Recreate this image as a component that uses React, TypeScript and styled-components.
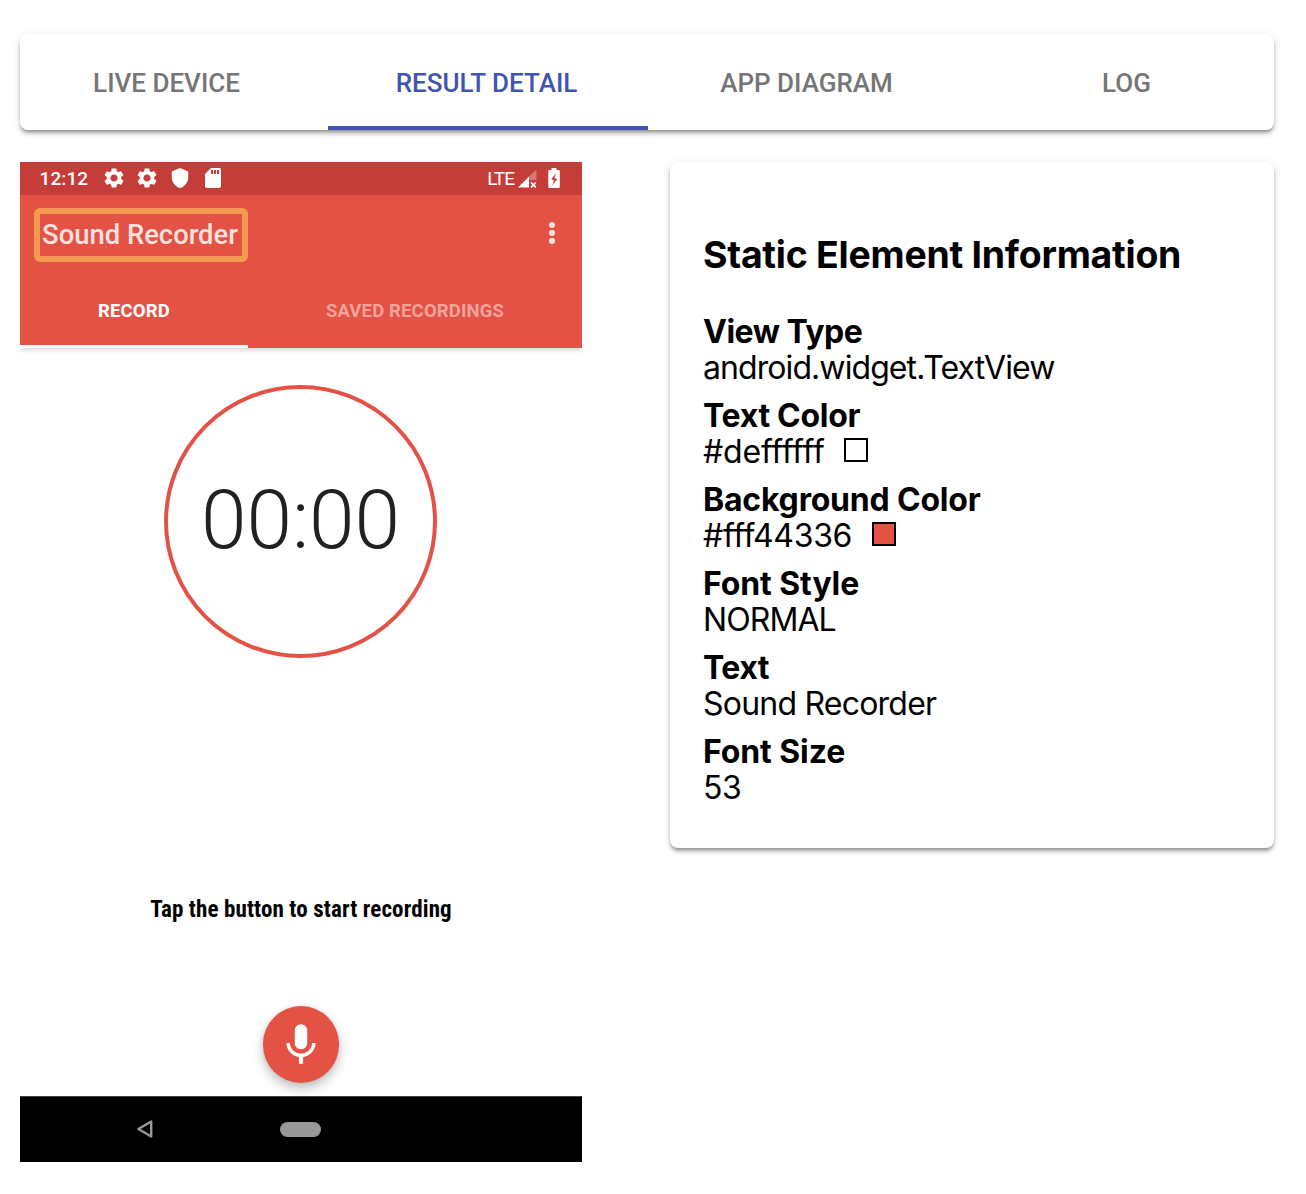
import React from "react";
import styled, { createGlobalStyle } from "styled-components";
import { MdSettings, MdShield, MdSdCard, MdMic } from "react-icons/md";

const Global = createGlobalStyle`
  * { box-sizing: border-box; }
  body { margin: 0; background: #fff; color: #000; font-family: Roboto, sans-serif; }
`;

const RED = "#e35244";

const Page = styled.div`
  width: 1306px;
  height: 1194px;
  padding: 34px 32px 32px 20px;
  display: flex;
  flex-direction: column;
  gap: 32px;
  overflow: hidden;
`;

const Paper = styled.div`
  background: #fff;
  border-radius: 8px;
  box-shadow: 0 2px 10px rgba(0, 0, 0, 0.12), 0 4px 4px rgba(0, 0, 0, 0.14),
    0 3px 3px -1px rgba(0, 0, 0, 0.26);
`;

const TabBar = styled(Paper)`
  height: 96px;
  flex: none;
  display: flex;
  overflow: hidden;
`;

const TabStrip = styled.div`
  display: flex;
  margin-left: -12px;
`;

const Tab = styled.div<{ $active?: boolean }>`
  width: 320px;
  flex: none;
  display: flex;
  align-items: center;
  justify-content: center;
  padding: ${(p) => (p.$active ? "6px 3px 0 0" : "2px 3px 0 0")};
  border-bottom: ${(p) => (p.$active ? "4px solid #4054b2" : "0")};
  color: ${(p) => (p.$active ? "#4054b2" : "#757575")};
  font-size: 26px;
  font-weight: 500;
`;

const Columns = styled.div`
  display: flex;
  gap: 88px;
  align-items: flex-start;
`;

const Phone = styled.div`
  width: 562px;
  height: 1000px;
  flex: none;
  display: flex;
  flex-direction: column;
`;

const StatusBar = styled.div`
  height: 33px;
  flex: none;
  background: #c43d39;
  color: #fff;
  display: flex;
  align-items: center;
  justify-content: space-between;
  padding: 0 22.5px 1px 19.5px;
`;

const Clock = styled.span`
  font-size: 19px;
  font-weight: 500;
  letter-spacing: 0.1px;
  width: 62.5px;
  padding-top: 1px;
`;

const StatusGroup = styled.div`
  display: flex;
  align-items: center;
  svg { display: block; }
`;

const StatusIcons = styled.div`
  display: flex;
  align-items: center;
  gap: 9px;

  svg:nth-child(3) {
    margin: 0 1px 0 0.5px;
  }
`;

const Network = styled.span`
  font-size: 19px;
  letter-spacing: -1px;
  padding-top: 1px;
  margin-right: 4px;
`;

const Indicators = styled.div`
  display: flex;
  align-items: center;
  gap: 9.5px;
`;

const AppBar = styled.div`
  height: 153px;
  flex: none;
  background: ${RED};
  display: flex;
  flex-direction: column;
  justify-content: space-between;
  box-shadow: 0 2px 5px rgba(0, 0, 0, 0.16);
  position: relative;
  clip-path: inset(0 0 -12px 0);
`;

const Toolbar = styled.div`
  display: flex;
  justify-content: space-between;
  padding: 13px 27px 0 14px;
`;

const Selection = styled.div`
  width: 214px;
  height: 54px;
  border: 6px solid #f39b50;
  border-radius: 6px;
  display: flex;
  align-items: center;
  justify-content: center;
  padding-right: 2px;
  color: #fbe2df;
  font-size: 27.4px;
  font-weight: 500;
  white-space: nowrap;
`;

const Overflow = styled.div`
  display: flex;
  flex-direction: column;
  gap: 2px;
  padding-top: 14px;
`;

const Dot = styled.i`
  width: 6px;
  height: 6px;
  border-radius: 50%;
  background: #fbe2df;
`;

const PhoneTabs = styled.div`
  display: flex;
  height: 72px;
`;

const PhoneTab = styled.div<{ $w: number; $active?: boolean }>`
  width: ${(p) => p.$w}px;
  border-bottom: 3px solid ${(p) => (p.$active ? "#fff" : RED)};
  color: ${(p) => (p.$active ? "#fff" : "#f1a39c")};
  font-size: 18.5px;
  font-weight: 700;
  letter-spacing: 0.15px;
  text-align: center;
  line-height: 70px;
`;

const Screen = styled.div`
  flex: 1;
  display: flex;
  flex-direction: column;
  align-items: center;
  padding-top: 36.5px;
`;

const Dial = styled.div`
  width: 273px;
  height: 273px;
  flex: none;
  margin-right: 1px;
  border: 4px solid ${RED};
  border-radius: 50%;
  display: flex;
  align-items: center;
  justify-content: center;
  color: #212121;
  font-size: 82px;
  font-weight: 300;
  padding-bottom: 2px;
`;

const Hint = styled.div`
  margin-top: 237px;
  height: 30px;
  line-height: 30px;
  font-family: "Roboto Condensed", Roboto, sans-serif;
  font-stretch: 75%;
  font-size: 23px;
  font-weight: 700;
  letter-spacing: 0.12px;
  white-space: nowrap;
`;

const Fab = styled.div`
  margin-top: 81.5px;
  margin-right: 0.5px;
  width: 76.5px;
  height: 76.5px;
  flex: none;
  border-radius: 50%;
  background: ${RED};
  color: #fff;
  display: flex;
  align-items: center;
  justify-content: center;
  padding-top: 1px;
  box-shadow: 0 6px 12px rgba(0, 0, 0, 0.24), 0 0 4px rgba(0, 0, 0, 0.1);
`;

const NavBar = styled.div`
  height: 66px;
  flex: none;
  background: #000;
  border-top: 1px solid #444;
  display: flex;
  align-items: center;
  padding-left: 116px;
  padding-bottom: 1px;
  position: relative;
`;

const HomePill = styled.div`
  width: 41px;
  height: 15px;
  border-radius: 8px;
  background: #999;
  margin-left: 126px;
`;

const InfoCard = styled(Paper)`
  width: 604px;
  height: 686px;
  padding: 70px 33px 0;
  font-family: Inter, sans-serif;
`;

const Heading = styled.h3`
  margin: 0 0 36px;
  font-size: 37.44px;
  line-height: 46px;
  font-weight: 700;
  letter-spacing: -0.25px;
  white-space: nowrap;
`;

const Field = styled.div`
  height: 84px;
  font-size: 32px;
  line-height: 36px;
`;

const Label = styled.div<{ $ls: number }>`
  font-weight: 700;
  letter-spacing: ${(p) => p.$ls}px;
`;

const Value = styled.div<{ $ls: number }>`
  display: flex;
  align-items: center;
  font-weight: 380;
  span {
    letter-spacing: ${(p) => p.$ls}px;
  }
`;

const Swatch = styled.i<{ $c: string }>`
  width: 24px;
  height: 24px;
  margin: 0 0 4px 19.500px;
  border: 2px solid #000;
  background: ${(p) => p.$c};
`;

const fields = [
  { label: "View Type", value: "android.widget.TextView", lls: -0.5, vls: -0.92 },
  { label: "Text Color", value: "#deffffff", lls: -0.3, vls: -0.2, swatch: "#fff" },
  { label: "Background Color", value: "#fff44336", lls: -0.2, vls: -0.32, swatch: RED },
  { label: "Font Style", value: "NORMAL", lls: -0.1, vls: -0.92 },
  { label: "Text", value: "Sound Recorder", lls: -0.5, vls: -0.78 },
  { label: "Font Size", value: "53", lls: -0.1, vls: -0.4 },
];

const Signal = () => (
  <svg width="20" height="20" viewBox="0 0 20 20">
    <path d="M18.500 1.500V12H11V8.500Z" fill="#fff" opacity=".3" />
    <path d="M0 19.500L11 8.500V19.500Z" fill="#fff" />
    <path d="M13 14.500L17.800 19.300M17.800 14.500L13 19.300" stroke="#fff" strokeWidth="1.700" />
  </svg>
);

const Battery = () => (
  <svg width="12" height="20" viewBox="0 0 12 20">
    <path
      fillRule="evenodd"
      fill="#fff"
      d="M3.500 0h5v2H11q.8 0 .8.8V19q0 1-.8 1H1.200q-.9 0-.9-1V2.800Q.3 2 1.200 2H3.500ZM8.200 5L3.200 11.200L6 12.200L4.200 17.500L9.200 11L6.400 10Z"
    />
  </svg>
);

export default function App() {
  return (
    <>
      <Global />
      <Page>
        <TabBar>
          <TabStrip>
            <Tab>LIVE DEVICE</Tab>
            <Tab $active>RESULT DETAIL</Tab>
            <Tab>APP DIAGRAM</Tab>
            <Tab>LOG</Tab>
          </TabStrip>
        </TabBar>
        <Columns>
          <Phone>
            <StatusBar>
              <StatusGroup>
                <Clock>12:12</Clock>
                <StatusIcons>
                  <MdSettings size={24} />
                  <MdSettings size={24} />
                  <MdShield size={22} />
                  <MdSdCard size={24} />
                </StatusIcons>
              </StatusGroup>
              <StatusGroup>
                <Network>LTE</Network>
                <Indicators>
                  <Signal />
                  <Battery />
                </Indicators>
              </StatusGroup>
            </StatusBar>
            <AppBar>
              <Toolbar>
                <Selection>Sound Recorder</Selection>
                <Overflow>
                  <Dot />
                  <Dot />
                  <Dot />
                </Overflow>
              </Toolbar>
              <PhoneTabs>
                <PhoneTab $w={228} $active>RECORD</PhoneTab>
                <PhoneTab $w={334}>SAVED RECORDINGS</PhoneTab>
              </PhoneTabs>
            </AppBar>
            <Screen>
              <Dial>00:00</Dial>
              <Hint>Tap the button to start recording</Hint>
              <Fab>
                <MdMic size={50} />
              </Fab>
            </Screen>
            <NavBar>
              <svg width="18" height="20" viewBox="0 0 18 20">
                <path d="M15.200 2.500V17.500L2.400 10Z" fill="none" stroke="#999" strokeWidth="2.400" strokeLinejoin="round" />
              </svg>
              <HomePill />
            </NavBar>
          </Phone>
          <InfoCard>
            <Heading>Static Element Information</Heading>
            {fields.map((f) => (
              <Field key={f.label}>
                <Label $ls={f.lls}>{f.label}</Label>
                <Value $ls={f.vls}>
                  <span>{f.value}</span>
                  {f.swatch && <Swatch $c={f.swatch} />}
                </Value>
              </Field>
            ))}
          </InfoCard>
        </Columns>
      </Page>
    </>
  );
}
